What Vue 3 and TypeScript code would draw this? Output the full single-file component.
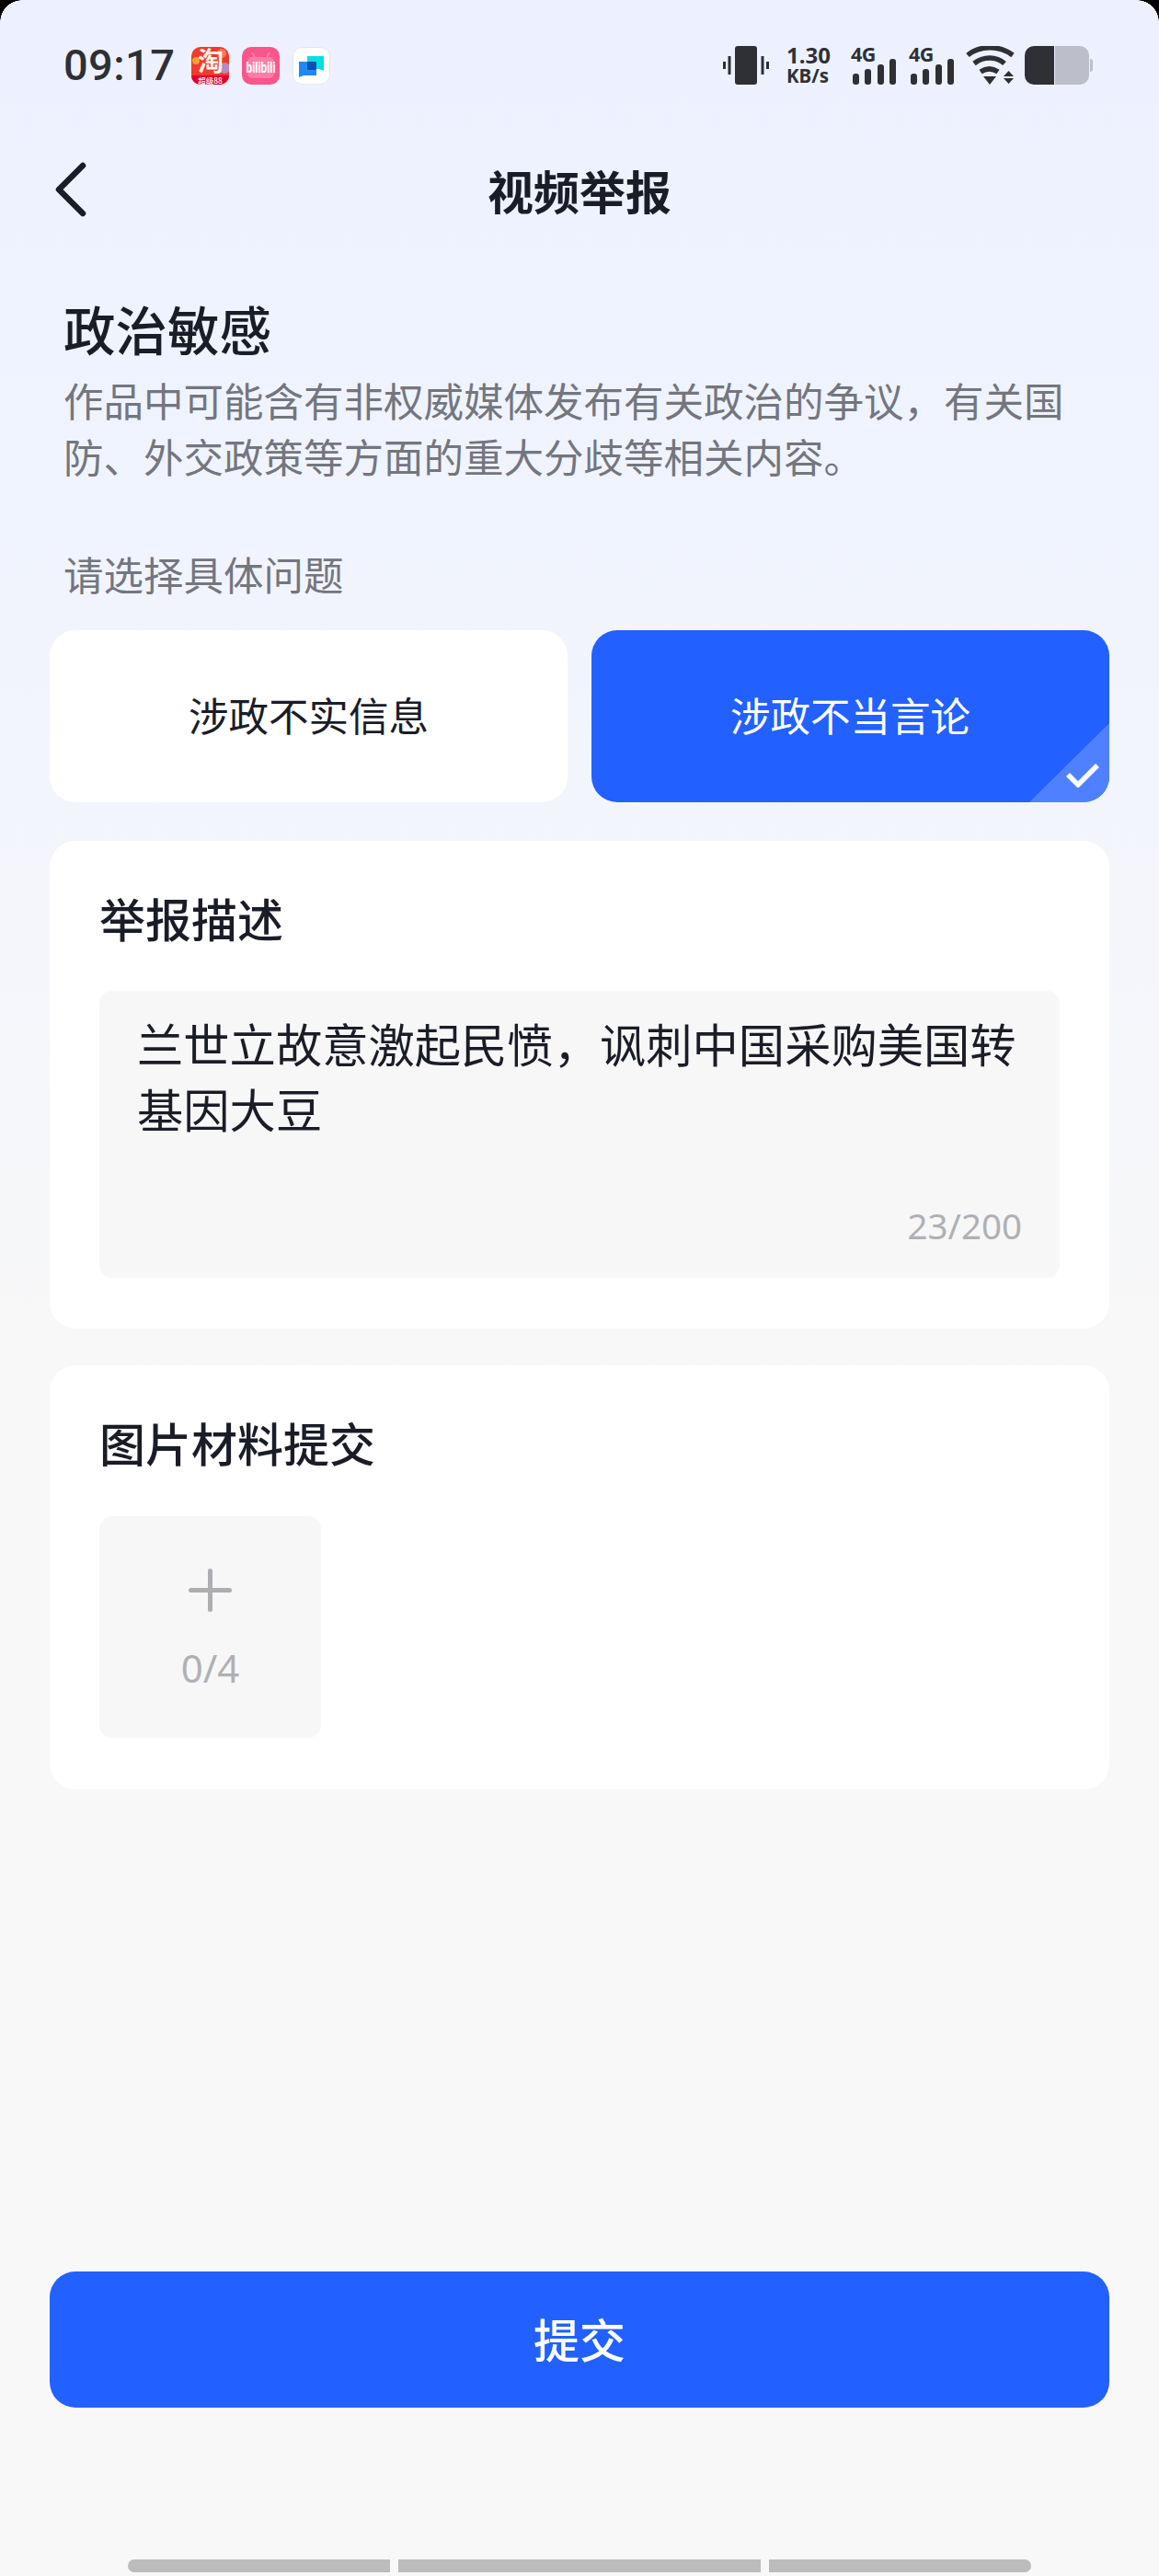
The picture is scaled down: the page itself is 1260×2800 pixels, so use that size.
<script setup lang="ts">
import { ref } from 'vue'

interface Option { id: number; label: string }

const options: Option[] = [
  { id: 1, label: '涉政不实信息' },
  { id: 2, label: '涉政不当言论' },
]
const selected = ref(2)
const description = '兰世立故意激起民愤，讽刺中国采购美国转基因大豆'
const bars = [12, 17, 22, 28]
</script>

<template>
  <div class="screen">
    <header class="status">
      <div class="status-left">
        <span class="time">09:17</span>
        <svg class="app" viewBox="0 0 41 41">
          <defs>
            <clipPath id="tbClip"><rect width="41" height="41" rx="10" /></clipPath>
          </defs>
          <g clip-path="url(#tbClip)">
            <rect width="41" height="41" fill="#ef3a2c" />
            <circle cx="36" cy="23" r="6" fill="#b08cc0" />
            <circle cx="5" cy="15" r="4" fill="#f8a030" />
            <circle cx="33" cy="7" r="5" fill="#f77a66" />
            <rect y="31" width="41" height="10" fill="#e4002b" />
            <text x="21" y="26" class="tb-main">淘</text>
            <text x="20.500" y="39.500" class="tb-sub">超级88</text>
          </g>
        </svg>
        <svg class="app" viewBox="0 0 41 41">
          <rect width="41" height="41" rx="10" fill="#f9568b" />
          <rect x="6" y="11" width="29" height="23" rx="5" fill="#ff7da6" />
          <path d="M14 11l-3-5M27 11l3-5" stroke="#ff7da6" stroke-width="2" />
          <text x="20.500" y="28" class="bili" textLength="32" lengthAdjust="spacingAndGlyphs">bilibili</text>
        </svg>
        <svg class="app" viewBox="0 0 41 41">
          <rect x=".5" y=".5" width="40" height="40" rx="10" fill="#fff" stroke="#e4e6ee" />
          <path d="M16 10h17a1 1 0 0 1 1 1v15l-5-2H16z" fill="#0bdde0" />
          <path d="M7 16h18a1 1 0 0 1 1 1v14H12l-5 2z" fill="#1e88f8" />
          <rect x="16" y="16" width="10" height="9" rx="2" fill="#0a4fb0" />
        </svg>
      </div>
      <div class="status-right">
        <svg class="vibrate" viewBox="0 0 50 42">
          <rect x="13" y="0" width="24" height="42" rx="3" fill="#2e3036" />
          <path d="M7 11v20M1.500 17v8M43 11v20M48.500 17v8" stroke="#2e3036" stroke-width="3" />
        </svg>
        <div class="speed"><span>1.30</span><span>KB/s</span></div>
        <div v-for="n in 2" :key="n" class="cell">
          <span class="cell-label">4G</span>
          <div class="cell-bars">
            <i v-for="h in bars" :key="h" :style="{ height: h + 'px' }"></i>
          </div>
        </div>
        <svg class="wifi" viewBox="0 0 53 42">
          <path d="M2 10C15-1 37-1 51 10" fill="none" stroke="#2e3036" stroke-width="5.500" />
          <path d="M9 19c10-8 24-8 33 0" fill="none" stroke="#2e3036" stroke-width="5.500" />
          <path d="M16 28c6-4 13-4 19 0" fill="none" stroke="#2e3036" stroke-width="5.500" />
          <path d="M19 33h14l-7 9zM41 33l5.500-6 5.500 6zM41 35h11l-5.500 6z" fill="#2e3036" />
        </svg>
        <svg class="battery" viewBox="0 0 74 42">
          <path d="M33 0h27a10 10 0 0 1 10 10v22a10 10 0 0 1-10 10H33z" fill="#bcbfc9" />
          <path d="M71 14a3 3 0 0 1 3 3v8a3 3 0 0 1-3 3z" fill="#bcbfc9" />
          <path d="M32 0H10A10 10 0 0 0 0 10v22a10 10 0 0 0 10 10h22z" fill="#2e3036" />
        </svg>
      </div>
    </header>

    <nav class="nav">
      <svg class="back" viewBox="0 0 34 60">
        <path d="M30 4L4 30l26 26" fill="none" stroke="#1a1d28" stroke-width="6.500" stroke-linecap="round" stroke-linejoin="round" />
      </svg>
      <h1 class="nav-title">视频举报</h1>
    </nav>

    <section class="intro">
      <h2 class="intro-title">政治敏感</h2>
      <p class="intro-text">作品中可能含有非权威媒体发布有关政治的争议，有关国防、外交政策等方面的重大分歧等相关内容。</p>
    </section>

    <p class="prompt">请选择具体问题</p>

    <div class="options">
      <button
        v-for="o in options"
        :key="o.id"
        class="option"
        :class="{ active: selected === o.id }"
        type="button"
        @click="selected = o.id"
      >
        {{ o.label }}
        <span v-if="selected === o.id" class="corner">
          <svg viewBox="0 0 36 27">
            <path d="M2 13l11 11L34 3" fill="none" stroke="#fff" stroke-width="5.500" />
          </svg>
        </span>
      </button>
    </div>

    <section class="card desc-card">
      <h3 class="card-title">举报描述</h3>
      <div class="desc-box">
        <p class="desc-text">{{ description }}</p>
        <span class="count">23/200</span>
      </div>
    </section>

    <section class="card pic-card">
      <h3 class="card-title">图片材料提交</h3>
      <div class="uploader">
        <svg class="plus" viewBox="0 0 47 47">
          <path d="M23.500 2.500v42M2.500 23.500h42" stroke="#aeaeb2" stroke-width="5" stroke-linecap="round" />
        </svg>
        <span class="upload-count">0/4</span>
      </div>
    </section>

    <button class="submit" type="button">提交</button>

    <div class="home-bar">
      <i class="seg-a"></i><i class="seg-b"></i><i class="seg-c"></i>
    </div>

    <i class="tip tip-l"></i>
    <i class="tip tip-r"></i>
  </div>
</template>

<style>
html, body { margin: 0; background: #000; }
</style>

<style scoped>
.screen {
  position: relative;
  width: 1260px;
  height: 2800px;
  box-sizing: border-box;
  overflow: hidden;
  display: flex;
  flex-direction: column;
  background: linear-gradient(180deg, #edf1ff 0, #eff3ff 400px, #f8f8f8 1500px);
  font-family: "Noto Sans CJK SC", "Noto Sans", sans-serif;
  color: #1a1d28;
}
.status {
  height: 42px;
  margin-top: 50px;
  padding: 0 72px 0 69px;
  display: flex;
  justify-content: space-between;
  align-items: center;
}
.status-left { display: flex; align-items: center; }
.time {
  width: 139px;
  font: 500 47px/56px Roboto, sans-serif;
  color: #2e3036;
  letter-spacing: 0.4px;
}
.app { width: 41px; height: 41px; margin-right: 14px; display: block; overflow: visible; }
.tb-main { font: 700 28px "Noto Sans CJK SC", sans-serif; fill: #fff5e6; text-anchor: middle; }
.tb-sub { font: 500 8.500px "Noto Sans CJK SC", sans-serif; fill: #fff; text-anchor: middle; }
.bili { font: 700 16px Roboto, sans-serif; fill: #fff; text-anchor: middle; }
.status-right { display: flex; align-items: center; }
.vibrate { width: 50px; height: 42px; display: block; }
.speed {
  width: 52px;
  margin: 0 5px 0 19px;
  display: flex;
  flex-direction: column;
  color: #2e3036;
  font: 700 20.500px/22px "Noto Sans", sans-serif;
}
.speed span:first-child { font-size: 24px; line-height: 22px; }
.cell { position: relative; width: 50px; height: 42px; margin-left: 13px; }
.cell-label {
  position: absolute;
  left: 0;
  top: -3px;
  font: 700 21.500px/24px "Noto Sans", sans-serif;
  letter-spacing: -0.5px;
  color: #2e3036;
}
.cell-bars {
  position: absolute;
  left: 2px;
  right: 1px;
  bottom: 0;
  display: flex;
  align-items: flex-end;
  justify-content: space-between;
}
.cell-bars i { width: 7px; border-radius: 3px; background: #2e3036; display: block; }
.wifi { width: 53px; height: 42px; margin-left: 12px; display: block; }
.battery { width: 74px; height: 42px; margin-left: 11px; display: block; }

.nav {
  position: relative;
  height: 60px;
  margin-top: 84px;
  display: flex;
  align-items: center;
  justify-content: center;
}
.back { position: absolute; left: 60px; top: 0; width: 34px; height: 60px; }
.nav-title { margin: 0; font-size: 50px; font-weight: 700; line-height: 60px; }

.intro { margin-top: 82px; padding: 0 54px 0 69px; }
.intro-title { margin: 0; font-size: 56.500px; font-weight: 500; line-height: 76px; }
.intro-text {
  margin: 10px 0 0;
  font-size: 43.500px;
  line-height: 61px;
  color: #73767f;
}
.prompt {
  margin: 67px 0 0 69px;
  font-size: 43.500px;
  line-height: 62px;
  color: #73767f;
}
.options {
  margin: 30px 54px 0;
  display: flex;
  gap: 26px;
}
.option {
  position: relative;
  flex: 1;
  height: 187px;
  padding: 0 0 5px;
  border: 0;
  border-radius: 28px;
  overflow: hidden;
  background: #fff;
  color: #1a1d28;
  font: 400 43.500px "Noto Sans CJK SC", sans-serif;
}
.option.active { background: #2261ff; color: #fff; }
.corner {
  position: absolute;
  right: 0;
  bottom: 0;
  width: 87px;
  height: 86px;
  background: #4f80ff;
  clip-path: polygon(100% 0, 100% 100%, 0 100%);
}
.corner svg {
  position: absolute;
  right: 11px;
  bottom: 16px;
  width: 36px;
  height: 27px;
}
.card {
  margin: 42px 54px 0;
  padding: 0 54px;
  background: #fff;
  border-radius: 28px;
}
.desc-card { height: 530px; padding-top: 50px; box-sizing: border-box; }
.pic-card { height: 461px; margin-top: 40px; padding-top: 50px; box-sizing: border-box; }
.card-title { margin: 0; font-size: 50px; font-weight: 500; line-height: 66px; }
.desc-box {
  position: relative;
  height: 312px;
  margin-top: 47px;
  padding: 21px 41px 0 42px;
  box-sizing: border-box;
  background: #f7f7f8;
  border-radius: 14px;
}
.desc-text { margin: 0 0 0 -1px; font-size: 50.300px; line-height: 71px; color: #1a1d28; }
.count {
  position: absolute;
  right: 41px;
  bottom: 35px;
  font: 400 38.500px/44px "Noto Sans", sans-serif;
  color: #b0b0b4;
}
.uploader {
  width: 241px;
  height: 241px;
  margin-top: 48px;
  background: #f7f7f8;
  border-radius: 14px;
  display: flex;
  flex-direction: column;
  align-items: center;
}
.plus { width: 47px; height: 47px; margin-top: 57px; display: block; }
.upload-count {
  margin-top: 39px;
  font: 400 42px/44px "Noto Sans", sans-serif;
  color: #b0b0b4;
}
.submit {
  margin: auto 54px 0;
  height: 148px;
  padding: 0 0 4px;
  border: 0;
  border-radius: 28px;
  background: #2261ff;
  color: #fff;
  font: 500 50px "Noto Sans CJK SC", sans-serif;
}
.home-bar {
  margin: 165px 0 4px 139px;
  width: 982px;
  height: 14px;
  display: flex;
  gap: 9px;
}
.home-bar i { display: block; height: 14px; background: #bcbcbc; }
.seg-a { width: 285px; border-radius: 7px 0 0 7px; }
.seg-b { width: 394px; }
.seg-c { flex: 1; border-radius: 0 7px 7px 0; }

/* Rounded display corners */
.tip { position: absolute; top: 0; width: 24px; height: 24px; }
.tip-l { left: 0; background: radial-gradient(circle at 100% 100%, transparent 23.500px, #000 24px); }
.tip-r { right: 0; background: radial-gradient(circle at 0 100%, transparent 23.500px, #000 24px); }
</style>
